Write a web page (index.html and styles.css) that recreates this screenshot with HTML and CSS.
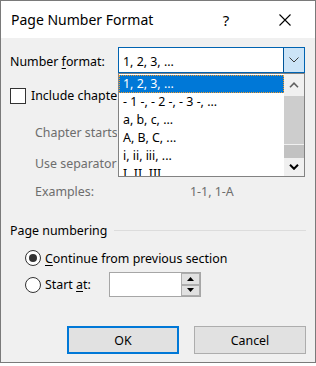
FILE: index.html
```html
<!DOCTYPE HTML>
<html>
<head>
  <meta charset="utf-8">
  <title>Page Number Format</title>
  <link rel="stylesheet" href="styles.css">
</head>
<body>
<div class="window">
  <div class="titlebar">
    <span class="title">Page Number Format</span>
    <span class="help">?</span>
    <span class="close">
      <svg width="12" height="12" viewBox="0 0 12 12"><path d="M0.5 0.5 L11.5 11.5 M11.5 0.5 L0.5 11.5" stroke="#000" stroke-width="1.1" fill="none"/></svg>
    </span>
  </div>

  <div class="content">
    <div class="format-row">
      <span class="label">Number <u>f</u>ormat:</span>
      <div class="combo">
        <span class="combo-text">1, 2, 3, ...</span>
        <span class="drop-btn">
          <svg width="10" height="6" viewBox="0 0 10 6"><path d="M0.5 0.5 L5 5 L9.5 0.5" stroke="#3c3c3c" stroke-width="1" fill="none"/></svg>
        </span>
      </div>

      <!-- open list of the combo -->
      <div class="list">
        <div class="items">
          <div class="item selected">1, 2, 3, ...</div>
          <div class="item">- 1 -, - 2 -, - 3 -, ...</div>
          <div class="item">a, b, c, ...</div>
          <div class="item">A, B, C, ...</div>
          <div class="item">i, ii, iii, ...</div>
          <div class="item">I, II, III, ...</div>
        </div>
        <div class="scrollbar">
          <div class="sb-up">
            <svg width="10" height="6" viewBox="0 0 10 6"><path d="M1 5.2 L5 1.2 L9 5.2" stroke="#606060" stroke-width="1.6" fill="none"/></svg>
          </div>
          <div class="sb-thumb"></div>
          <div class="sb-gap"></div>
          <div class="sb-thumb2"></div>
          <div class="sb-down">
            <svg width="10" height="6" viewBox="0 0 10 6"><path d="M1 0.8 L5 4.8 L9 0.8" stroke="#000" stroke-width="2" fill="none"/></svg>
          </div>
        </div>
      </div>
    </div>

    <div class="check-row">
      <span class="checkbox"></span>
      <span class="clip check-text">Include chapter <u>n</u>umber</span>
    </div>

    <div class="sub-row first"><span class="clip sub-text">Chapter starts with style</span></div>
    <div class="sub-row second"><span class="clip sub-text">Use separator:</span></div>
    <div class="sub-row third">
      <span class="sub-label">Examples:</span>
      <span>1-1, 1-A</span>
    </div>

    <div class="group-title">
      <span>Page numbering</span>
      <span class="group-line"></span>
    </div>

    <div class="radio-row">
      <span class="radio checked"><span class="dot"></span></span>
      <span><u>C</u>ontinue from previous section</span>
    </div>
    <div class="radio-row start-row">
      <span class="radio"></span>
      <span class="start-label">Start <u>a</u>t:</span>
      <div class="spin">
        <span class="spin-field"></span>
        <span class="spin-btns">
          <span class="spin-btn"><svg width="7" height="4" viewBox="0 0 7 4"><path d="M0 4 L3.5 0 L7 4 Z" fill="#000"/></svg></span>
          <span class="spin-btn"><svg width="7" height="4" viewBox="0 0 7 4"><path d="M0 0 L3.5 4 L7 0 Z" fill="#000"/></svg></span>
        </span>
      </div>
    </div>

    <div class="buttons">
      <button class="btn default">OK</button>
      <button class="btn">Cancel</button>
    </div>
  </div>
</div>
</body>
</html>
```

FILE: styles.css
```css
body {
  margin: 0;
  padding: 0;
  background-color: #fff;
  font-family: "Noto Sans", "Open Sans", sans-serif;
  font-size: 12.4px;
  color: #000;
}
u {
  text-decoration-thickness: 1px;
  text-underline-offset: 2px;
}
.window {
  width: 314px;
  height: 361px;
  border: 1px solid #7a7a7a;
  background-color: #f0f0f0;
}
.titlebar {
  height: 37px;
  background-color: #fff;
  display: flex;
  align-items: center;
  padding-left: 10px;
  font-size: 14px;
}
.title {
  flex: 1;
}
.help {
  width: 58px;
  text-align: center;
  font-size: 15px;
}
.close {
  width: 60px;
  display: flex;
  justify-content: center;
  align-items: center;
}
.content {
  padding: 9px 9px 0 9px;
}
.format-row {
  display: flex;
  align-items: center;
  height: 26px;
  position: relative;
}
.format-row .label {
  width: 108px;
  padding-top: 3px;
}
.combo {
  width: 187px;
  height: 26px;
  box-sizing: border-box;
  border: 1px solid #0063b1;
  background-color: #fff;
  display: flex;
}
.combo-text {
  flex: 1;
  padding-left: 4px;
  line-height: 26px;
  padding-top: 1px;
}
.drop-btn {
  width: 20px;
  background-color: #cce4f7;
  border-left: 1px solid #005499;
  display: flex;
  justify-content: center;
  align-items: center;
}
.list {
  position: absolute;
  left: 108px;
  top: 26px;
  width: 187px;
  height: 104px;
  box-sizing: border-box;
  border: 1px solid #828282;
  background-color: #fff;
  display: flex;
  z-index: 2;
}
.items {
  flex: 1;
  padding-top: 1px;
  overflow: hidden;
}
.item {
  height: 18px;
  line-height: 18px;
  padding-left: 4px;
  white-space: nowrap;
}
.item.selected {
  background-color: #0078d7;
  color: #fff;
  outline: 1px dotted #f29b2c;
  outline-offset: -1px;
}
.scrollbar {
  width: 20px;
  display: flex;
  flex-direction: column;
  background-color: #f0f0f0;
}
.sb-up {
  height: 22px;
  display: flex;
  justify-content: center;
  align-items: center;
}
.sb-thumb {
  height: 48px;
  background-color: #cdcdcd;
}
.sb-gap {
  height: 1px;
}
.sb-thumb2 {
  height: 13px;
  background-color: #c2c2c2;
}
.sb-down {
  flex: 1;
  display: flex;
  justify-content: center;
  align-items: center;
}
.clip {
  white-space: nowrap;
  overflow: hidden;
}
.check-row {
  display: flex;
  align-items: center;
  height: 16px;
  margin-top: 15px;
}
.check-text {
  width: 86px;
  line-height: 18px;
}
.checkbox {
  width: 16px;
  height: 16px;
  box-sizing: border-box;
  border: 1px solid #333;
  background-color: #fff;
  margin-right: 5px;
}
.sub-row {
  padding-left: 25px;
  height: 18px;
  line-height: 18px;
  color: #6d6d6d;
  display: flex;
}
.sub-text {
  width: 82px;
}
.sub-row.first {
  margin-top: 20px;
}
.sub-row.second {
  margin-top: 13px;
}
.sub-row.third {
  margin-top: 10px;
}
.sub-label {
  width: 155px;
}
.group-title {
  display: flex;
  align-items: center;
  height: 18px;
  margin-top: 20px;
}
.group-line {
  flex: 1;
  height: 1px;
  background-color: #dcdcdc;
  margin-left: 7px;
}
.radio-row {
  display: flex;
  align-items: center;
  height: 18px;
  margin-top: 10px;
  padding-left: 15px;
}
.radio {
  width: 16px;
  height: 16px;
  box-sizing: border-box;
  border: 1px solid #333;
  border-radius: 50%;
  background-color: #fff;
  margin-right: 4px;
  display: flex;
  justify-content: center;
  align-items: center;
}
.radio .dot {
  width: 8px;
  height: 8px;
  border-radius: 50%;
  background-color: #333;
}
.start-row {
  height: 25px;
  margin-top: 5px;
}
.start-label {
  width: 64px;
}
.spin {
  width: 92px;
  height: 25px;
  box-sizing: border-box;
  border: 1px solid #a6a6a6;
  background-color: #fff;
  display: flex;
}
.spin-field {
  flex: 1;
}
.spin-btns {
  width: 19px;
  display: flex;
  flex-direction: column;
}
.spin-btn {
  flex: 1;
  background-color: #e1e1e1;
  border: 1px solid #adadad;
  display: flex;
  justify-content: center;
  align-items: center;
}
.buttons {
  display: flex;
  justify-content: flex-end;
  gap: 15px;
  margin-top: 29px;
}
.btn {
  width: 112px;
  height: 28px;
  box-sizing: border-box;
  background-color: #e1e1e1;
  border: 1px solid #adadad;
  font-family: inherit;
  font-size: 12.4px;
  color: #000;
  padding: 0;
}
.btn.default {
  border: 2px solid #0078d7;
}
```
